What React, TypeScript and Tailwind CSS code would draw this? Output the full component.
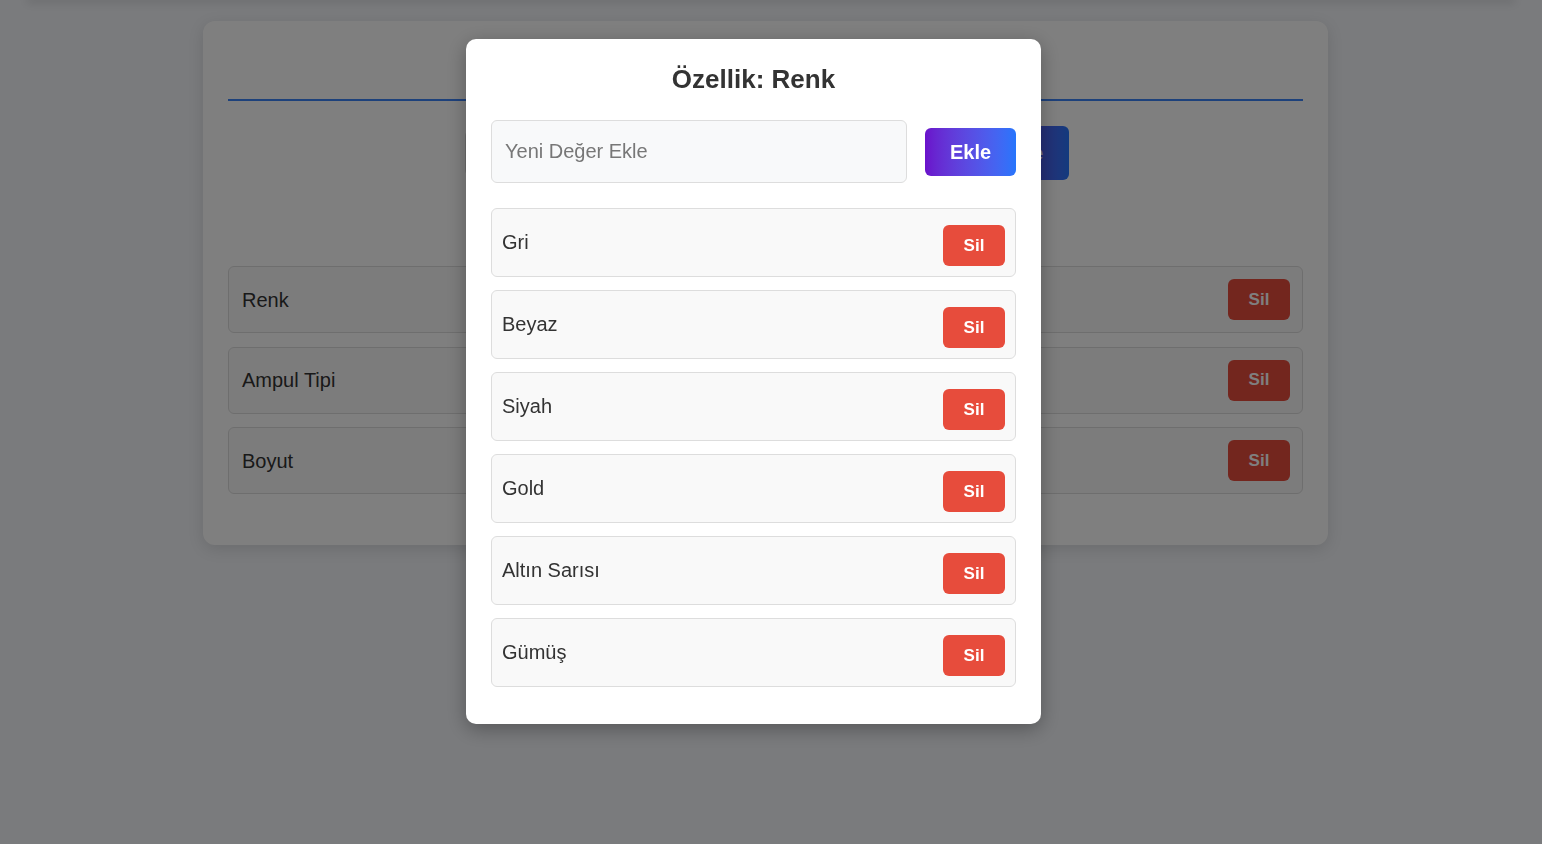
import React, { useState } from "react";

const pageItems = ["Renk", "Ampul Tipi", "Boyut"];

export default function App() {
  const [values, setValues] = useState<string[]>([
    "Gri",
    "Beyaz",
    "Siyah",
    "Gold",
    "Altın Sarısı",
    "Gümüş",
  ]);
  const [newValue, setNewValue] = useState("");

  const addValue = () => {
    if (!newValue.trim()) return;
    setValues([...values, newValue.trim()]);
    setNewValue("");
  };

  return (
    <div className="min-h-screen bg-[#f4f6fa] font-['Liberation_Sans',Arial,sans-serif] text-[#333]">
      {/* navbar shadow */}
      <div className="mx-[30px] h-0 shadow-[0_0_8px_3px_rgba(0,0,0,0.12)]"></div>

      <div className="pt-[21px] pl-[203px]">
        <div className="w-[1125px] rounded-xl bg-white px-[25px] pt-[20px] pb-[51px] shadow-[0_4px_16px_rgba(0,0,0,0.12)]">
          {/* başlık alanı (modal altında kalıyor) */}
          <div className="h-[60px] border-b-2 border-[#3b82f6]"></div>

          <div className="mt-[25px] flex items-center pl-[237px]">
            <input
              className="h-[46px] w-[495px] rounded-md border border-[#ddd] bg-[#f8f9fa] px-3 text-[20px]"
              readOnly
            />
            <button className="ml-[16px] h-[54px] w-[93px] rounded-md bg-gradient-to-r from-[#6a11cb] to-[#2575fc] text-[20px] font-bold text-white">
              Ekle
            </button>
          </div>

          <div className="mt-[86px] flex flex-col gap-[13.5px]">
            {pageItems.map((item) => (
              <div
                key={item}
                className="flex h-[67px] items-center justify-between rounded-md border border-[#ddd] bg-[#f9f9f9] pl-[13px] pr-[12px]"
              >
                <span className="text-[20px] text-[#333]">{item}</span>
                <button className="h-[41px] w-[62px] rounded-md bg-[#e74c3c] text-[17px] font-bold text-white">
                  Sil
                </button>
              </div>
            ))}
          </div>
        </div>
      </div>

      {/* modal */}
      <div className="fixed inset-0 flex items-start bg-black/50 pl-[466px] pt-[39px]">
        <div className="w-[575px] rounded-[10px] bg-white px-[25px] pt-[25px] pb-[37px] shadow-[0_5px_20px_rgba(0,0,0,0.3)]">
          <h3 className="text-center text-[26px] font-bold leading-[30px] text-[#333]">
            Özellik: Renk
          </h3>

          <div className="mt-[26px] mb-[25px] flex items-center">
            <input
              value={newValue}
              onChange={(e) => setNewValue(e.target.value)}
              className="h-[63px] w-[416px] rounded-md border border-[#ddd] bg-[#f8f9fa] px-[13px] text-[20px] text-[#333] outline-none placeholder:text-[#777]"
              placeholder="Yeni Değer Ekle"
            />
            <button
              onClick={addValue}
              className="ml-[18px] h-[48px] w-[91px] rounded-md bg-gradient-to-r from-[#6a11cb] to-[#2575fc] text-[20px] font-bold text-white"
            >
              Ekle
            </button>
          </div>

          <div className="flex flex-col gap-[13px]">
            {values.map((v, i) => (
              <div
                key={i}
                className="flex h-[69px] items-center justify-between rounded-md border border-[#ddd] bg-[#f9f9f9] pl-[10px] pr-[10px]"
              >
                <span className="-mt-[2px] text-[20px] text-[#333]">{v}</span>
                <button
                  onClick={() => setValues(values.filter((_, j) => j !== i))}
                  className="mt-[6px] h-[41px] w-[62px] rounded-md bg-[#e74c3c] text-[17px] font-bold text-white"
                >
                  Sil
                </button>
              </div>
            ))}
          </div>
        </div>
      </div>
    </div>
  );
}
